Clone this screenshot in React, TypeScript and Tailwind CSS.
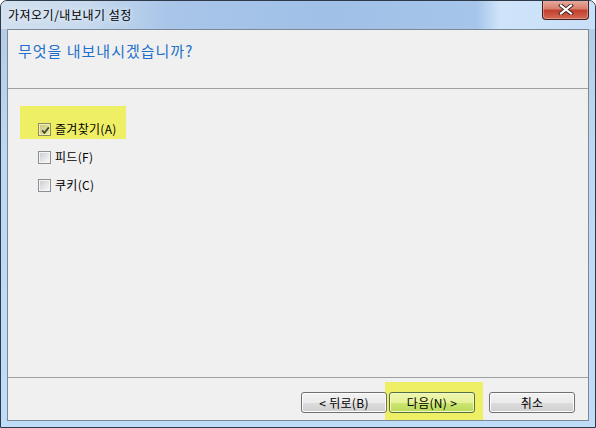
import React from "react";

function CheckBox({ checked, tinted }: { checked?: boolean; tinted?: boolean }) {
  return (
    <span
      className={
        "relative inline-flex w-[13px] h-[13px] shrink-0 border p-[1px] " +
        (tinted ? "border-[#8c8c62] bg-[#f2f2a8]" : "border-[#8e8f8f] bg-[#f4f4f4]")
      }
    >
      <span
        className={
          "block w-full h-full " +
          (tinted
            ? "bg-[linear-gradient(135deg,#c9c98a,#eaea9c)]"
            : "bg-[linear-gradient(135deg,#cbcfd5,#f7f7f7)]")
        }
      />
      {checked && (
        <svg className="absolute left-[1px] top-[1px]" width="11" height="11" viewBox="0 0 11 11">
          <path d="M2.2 5.4 L4.4 8 L8.8 2.4" fill="none" stroke="#3b4634" strokeWidth="1.7" />
        </svg>
      )}
    </span>
  );
}

function Row({ label, checked, tinted }: { label: string; checked?: boolean; tinted?: boolean }) {
  return (
    <div className="h-[28px] flex items-center">
      <CheckBox checked={checked} tinted={tinted} />
      <span className="ml-[4px] leading-[14px] tracking-[0.3px]">{label}</span>
    </div>
  );
}

function Btn({ children, primary, className }: { children: React.ReactNode; primary?: boolean; className?: string }) {
  return (
    <div
      className={
        "relative w-[86px] h-[21px] rounded-[3px] border flex items-center justify-center leading-[14px] tracking-[0.3px] " +
        (primary
          ? "border-[#55703f] bg-[linear-gradient(to_bottom,#eef6ae_0%,#e6f198_50%,#cde674_50%,#b9da5a_100%)] shadow-[inset_0_0_0_1px_#f4f9c8] "
          : "border-[#707070] bg-[linear-gradient(to_bottom,#f2f2f2_0%,#ebebeb_50%,#dddddd_50%,#cfcfcf_100%)] shadow-[inset_0_0_0_1px_#fcfcfc] ") +
        (className ?? "")
      }
    >
      {children}
    </div>
  );
}

export default function App() {
  return (
    <div className="w-[596px] h-[428px] font-['Noto_Sans_CJK_KR','Liberation_Sans',sans-serif] text-[12px] text-black">
      <div className="relative w-full h-full rounded-t-[7px] border border-[#2e3a48] bg-[linear-gradient(to_bottom,#b4c9e2_0%,#bdd8f4_35%,#bfdcf8_100%)] flex flex-col overflow-hidden">
        <div className="relative h-[28px] shrink-0 flex items-center pl-[7px] bg-[linear-gradient(to_right,#d2e0ef_0%,#c8daee_14%,#a9c6e9_28%,#a0c0e7_55%,#a5c5ea_80%,#cfe4f9_84%,#c8dff8_100%)]">
          <span className="leading-[14px] tracking-[0.5px] [text-shadow:0_0_6px_#ffffff]">가져오기/내보내기 설정</span>
          <div className="absolute right-[6px] top-[-1px] w-[47px] h-[20px] rounded-b-[4px] border border-t-0 border-[#40211d] bg-[linear-gradient(to_bottom,#e7b0a4_0%,#d8806e_45%,#c2402f_55%,#d56a52_100%)] shadow-[inset_0_0_0_1px_#f0b9aa80] flex items-center justify-center">
            <svg width="16" height="11" viewBox="0 0 16 11">
              <path d="M3 1.5 L13 9.5 M13 1.5 L3 9.5" fill="none" stroke="#3a2420" strokeWidth="4" strokeLinecap="square" />
              <path d="M3 1.5 L13 9.5 M13 1.5 L3 9.5" fill="none" stroke="#ffffff" strokeWidth="2.2" strokeLinecap="square" />
            </svg>
          </div>
        </div>
        <div className="flex-1 mx-[6px] mb-[6px] border border-[#7b8896] bg-[#f0f0f0] flex flex-col">
          <div className="h-[58px] shrink-0 pl-[10px] pt-[11px]">
            <div className="text-[15px] leading-[20px] tracking-[1px] text-[#1f70cc]">무엇을 내보내시겠습니까?</div>
          </div>
          <div className="h-px shrink-0 bg-[#a0a0a0]" />
          <div className="relative flex-1 pt-[26px] pl-[30px]">
            <div className="absolute left-[12px] top-[17px] w-[106px] h-[33px] bg-[#efef66]" />
            <div className="relative">
              <Row label="즐겨찾기(A)" checked tinted />
              <Row label="피드(F)" />
              <Row label="쿠키(C)" />
            </div>
          </div>
          <div className="h-px shrink-0 bg-[#a0a0a0]" />
          <div className="relative h-[42px] shrink-0 flex justify-end pt-[14px] pr-[13px]">
            <div className="absolute left-[377px] top-[4px] w-[98px] h-[38px] bg-[#efef66]" />
            <Btn>&lt; 뒤로(B)</Btn>
            <Btn primary className="ml-[2px]">다음(N) &gt;</Btn>
            <Btn className="ml-[14px]">취소</Btn>
          </div>
        </div>
      </div>
    </div>
  );
}
